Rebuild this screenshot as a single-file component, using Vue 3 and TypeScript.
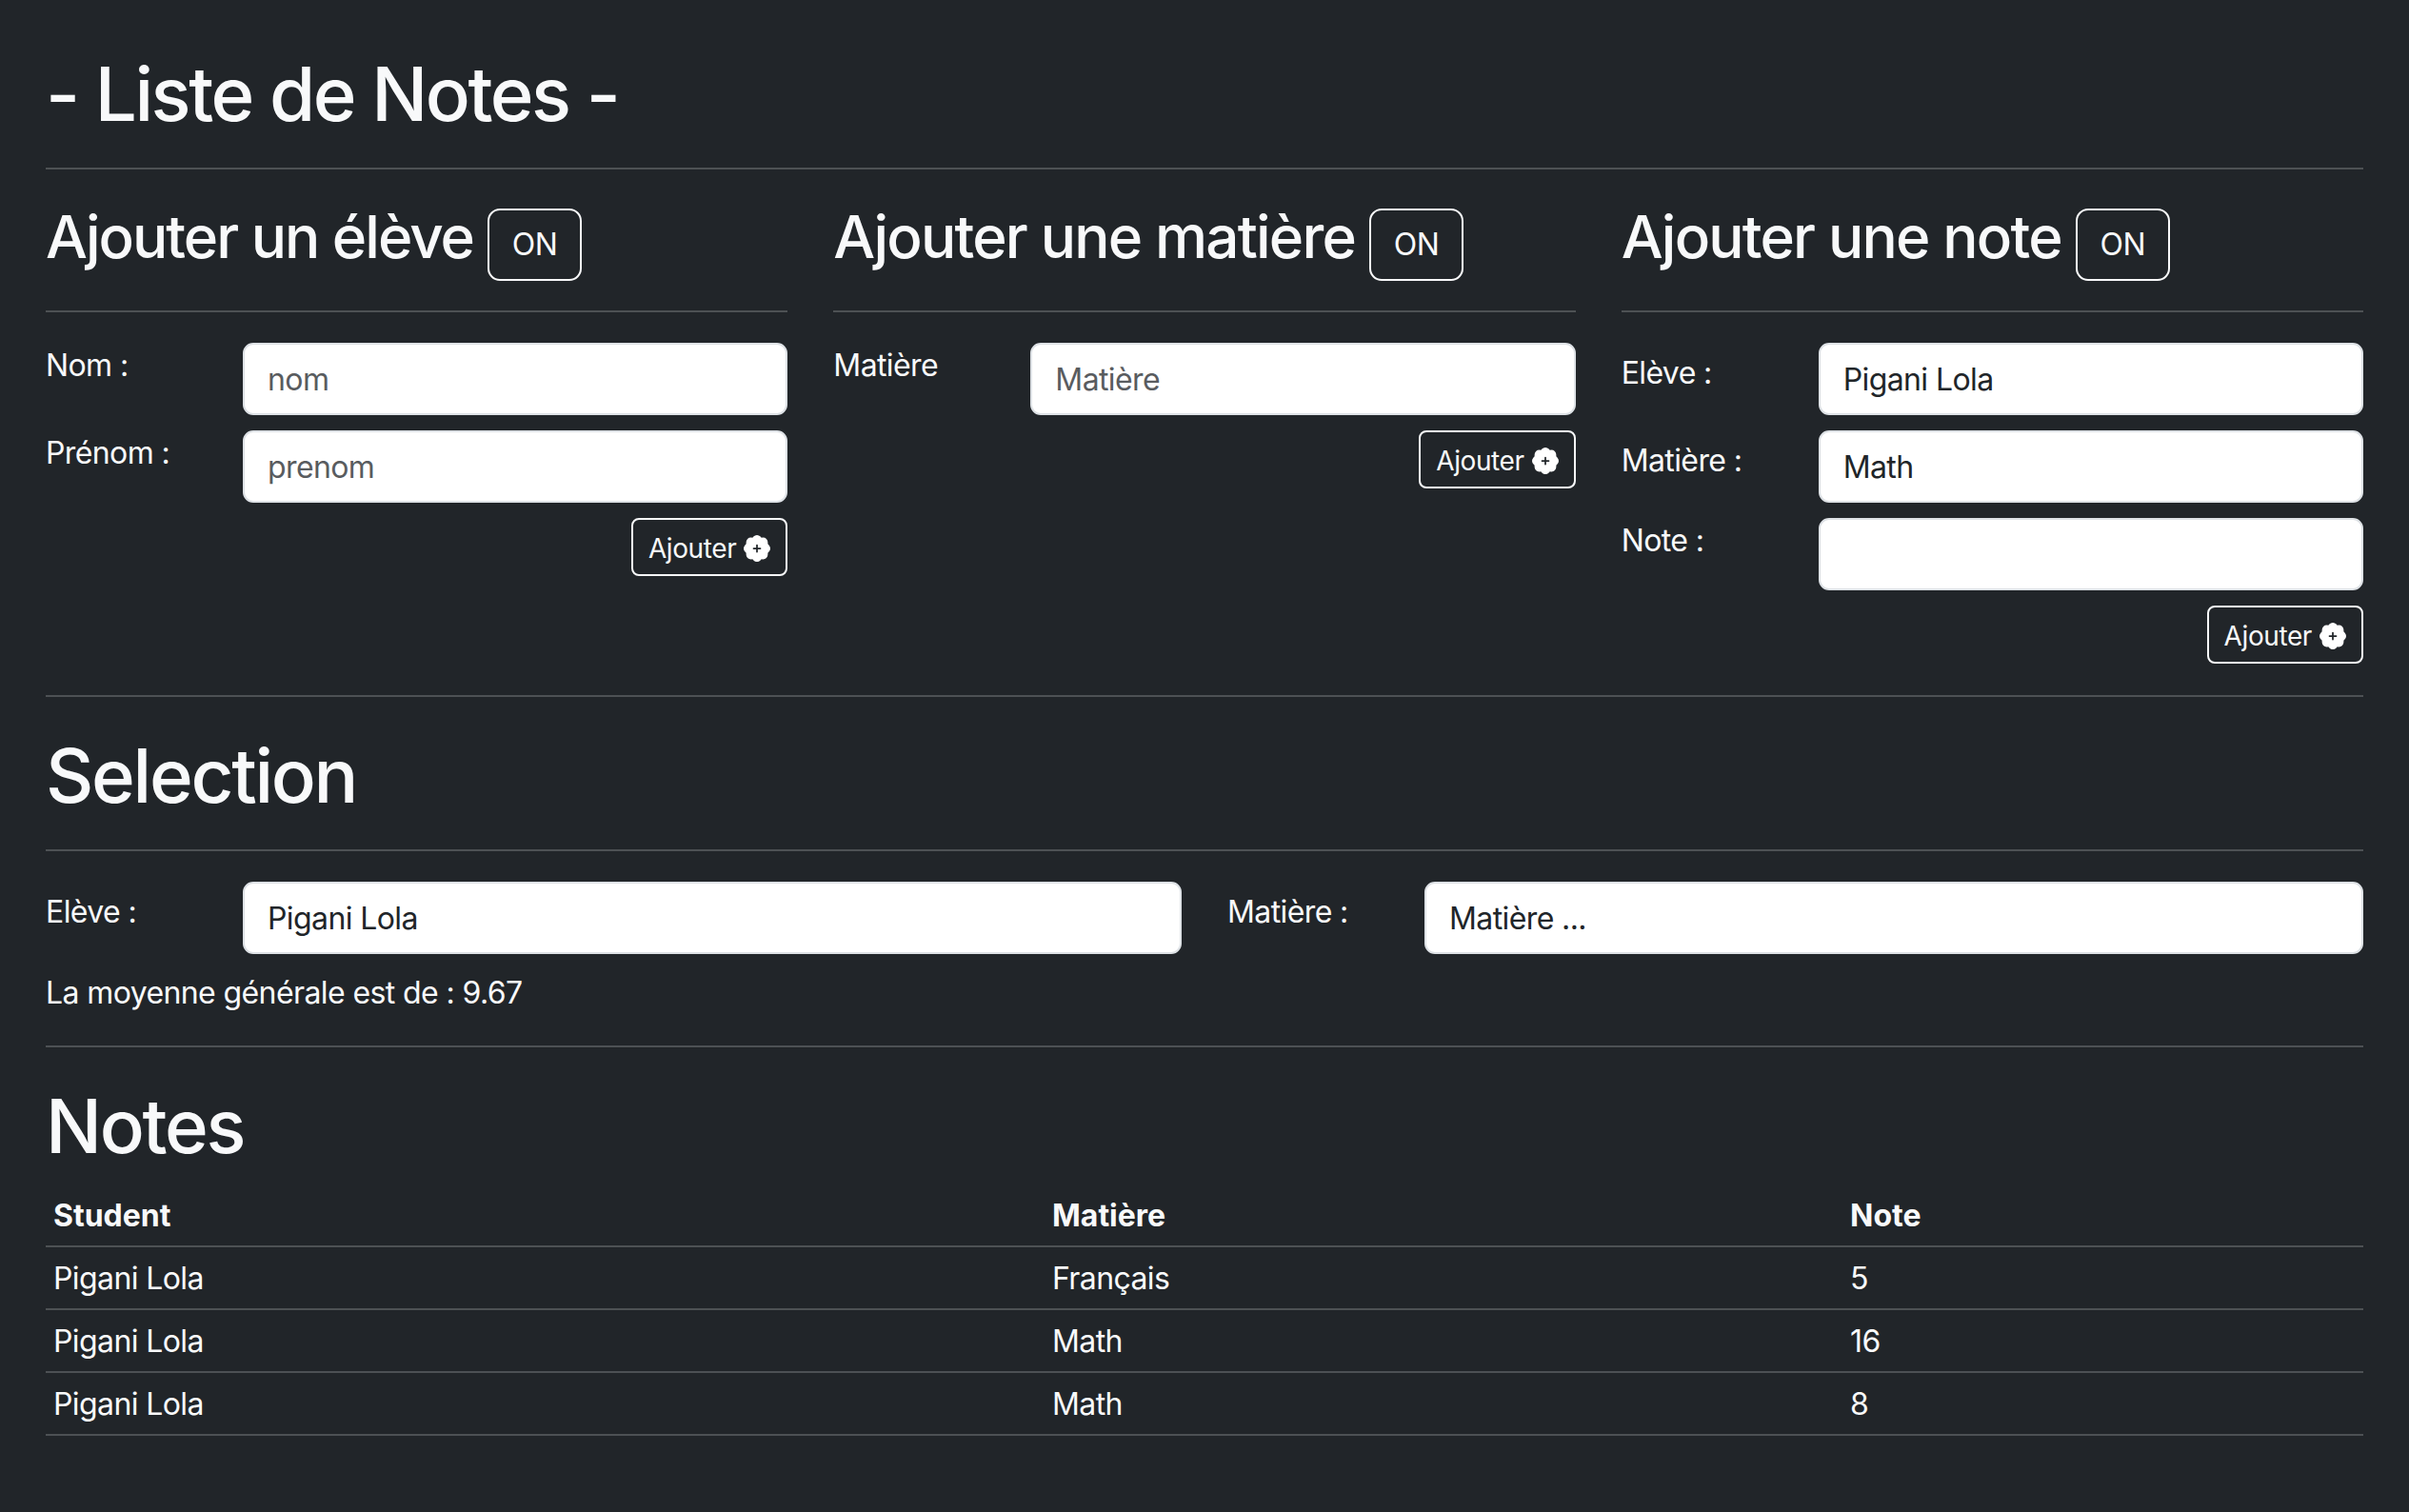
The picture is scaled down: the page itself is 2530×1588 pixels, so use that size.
<script setup lang="ts">
import { ref } from 'vue'

interface NoteRow {
  student: string
  matiere: string
  note: number
}

// bootstrap-icons patch-plus-fill
const patchPlus =
  'M10.067.87a2.89 2.89 0 0 0-4.134 0l-.622.638-.89-.011a2.89 2.89 0 0 0-2.924 2.924l.01.89-.636.622a2.89 2.89 0 0 0 0 4.134l.637.622-.011.89a2.89 2.89 0 0 0 2.924 2.924l.89-.01.622.636a2.89 2.89 0 0 0 4.134 0l.622-.637.89.011a2.89 2.89 0 0 0 2.924-2.924l-.01-.89.636-.622a2.89 2.89 0 0 0 0-4.134l-.637-.622.011-.89a2.89 2.89 0 0 0-2.924-2.924l-.89.01-.622-.636zM8.5 6v1.500H10a.5.5 0 0 1 0 1H8.500V10a.5.5 0 0 1-1 0V8.500H6a.5.5 0 0 1 0-1h1.500V6a.5.5 0 0 1 1 0z'

const notes = ref<NoteRow[]>([
  { student: 'Pigani Lola', matiere: 'Français', note: 5 },
  { student: 'Pigani Lola', matiere: 'Math', note: 16 },
  { student: 'Pigani Lola', matiere: 'Math', note: 8 },
])
</script>

<template>
  <div class="page">
    <h1 class="title">- Liste de Notes -</h1>
    <hr class="rule rule-title" />

    <div class="columns">
      <section>
        <div class="col-head">
          <h2 class="tight">Ajouter un élève</h2>
          <button class="toggle">ON</button>
        </div>
        <hr class="rule rule-head" />
        <div class="field">
          <label>Nom :</label>
          <input class="input" placeholder="nom" />
        </div>
        <div class="field">
          <label>Prénom :</label>
          <input class="input" placeholder="prenom" />
        </div>
        <div class="actions">
          <button class="add">
            Ajouter
            <svg class="plus" viewBox="0 0 16 16"><path fill="#fff" :d="patchPlus" /></svg>
          </button>
        </div>
      </section>

      <section>
        <div class="col-head">
          <h2>Ajouter une matière</h2>
          <button class="toggle">ON</button>
        </div>
        <hr class="rule rule-head" />
        <div class="field">
          <label>Matière</label>
          <input class="input" placeholder="Matière" />
        </div>
        <div class="actions">
          <button class="add">
            Ajouter
            <svg class="plus" viewBox="0 0 16 16"><path fill="#fff" :d="patchPlus" /></svg>
          </button>
        </div>
      </section>

      <section>
        <div class="col-head">
          <h2>Ajouter une note</h2>
          <button class="toggle">ON</button>
        </div>
        <hr class="rule rule-head" />
        <div class="field field-select">
          <label>Elève :</label>
          <div class="input select">Pigani Lola</div>
        </div>
        <div class="field field-select">
          <label>Matière :</label>
          <div class="input select">Math</div>
        </div>
        <div class="field">
          <label>Note :</label>
          <input class="input" />
        </div>
        <div class="actions">
          <button class="add">
            Ajouter
            <svg class="plus" viewBox="0 0 16 16"><path fill="#fff" :d="patchPlus" /></svg>
          </button>
        </div>
      </section>
    </div>

    <hr class="rule rule-section" />

    <h1 class="section-title">Selection</h1>
    <hr class="rule" />
    <div class="selection">
      <div class="field field-select">
        <label>Elève :</label>
        <div class="input select">Pigani Lola</div>
      </div>
      <div class="field field-select">
        <label>Matière :</label>
        <div class="input select">Matière ...</div>
      </div>
    </div>
    <p class="average">La moyenne générale est de : 9.67</p>
    <hr class="rule rule-average" />

    <h1 class="section-title notes-title">Notes</h1>
    <table>
      <thead>
        <tr>
          <th class="c1">Student</th>
          <th class="c2">Matière</th>
          <th>Note</th>
        </tr>
      </thead>
      <tbody>
        <tr v-for="(row, i) in notes" :key="i">
          <td>{{ row.student }}</td>
          <td>{{ row.matiere }}</td>
          <td>{{ row.note }}</td>
        </tr>
      </tbody>
    </table>
  </div>
</template>

<style scoped>
.page {
  box-sizing: border-box;
  min-height: 1588px;
  padding: 51px 48px 0;
  background: #212529;
  color: #f8f9fa;
  font-family: Inter, "Liberation Sans", sans-serif;
  font-size: 32px;
  line-height: 48px;
  letter-spacing: -0.6px;
}

.rule {
  border: 0;
  height: 2px;
  margin: 0;
  background: #4d5154;
}

.title {
  margin: 0;
  font-size: 78px;
  font-weight: 500;
  line-height: 96px;
  letter-spacing: -2.5px;
}

.rule-title {
  margin-top: 29px;
}

.columns {
  display: grid;
  grid-template-columns: repeat(3, 1fr);
  gap: 48px;
  margin-top: 39px;
}

.col-head {
  display: flex;
  align-items: center;
  gap: 15px;
  height: 76px;
}

h2 {
  margin: 0 0 12px;
  font-size: 62px;
  font-weight: 500;
  line-height: 70px;
  letter-spacing: -1.8px;
}

h2.tight {
  letter-spacing: -2px;
}

.toggle {
  box-sizing: border-box;
  width: 99px;
  height: 76px;
  margin-top: 3px;
  background: transparent;
  border: 2px solid #f8f9fa;
  border-radius: 13px;
  color: #f8f9fa;
  font: 400 32px Inter, sans-serif;
  letter-spacing: -0.6px;
}

.rule-head {
  margin: 33px 0 32px;
}

.field {
  display: grid;
  grid-template-columns: 207px 1fr;
  margin-bottom: 16px;
}

.field label {
  line-height: 48px;
}

.field-select label {
  padding-top: 8px;
}

.input {
  box-sizing: border-box;
  width: 100%;
  height: 76px;
  padding: 0 24px;
  background: #fff;
  border: 2px solid #dee2e6;
  border-radius: 11px;
  color: #212529;
  font: 400 32px/74px Inter, sans-serif;
  letter-spacing: -0.6px;
  outline: none;
}

.input::placeholder {
  color: #595c5f;
  opacity: 1;
}

.actions {
  display: flex;
  justify-content: flex-end;
}

.add {
  display: flex;
  align-items: center;
  gap: 8px;
  box-sizing: border-box;
  height: 61px;
  padding: 2px 16px 0;
  background: transparent;
  border: 2px solid #f8f9fa;
  border-radius: 8px;
  color: #f8f9fa;
  font: 400 28px Inter, sans-serif;
  letter-spacing: -0.4px;
}

.plus {
  width: 28px;
  height: 28px;
}

.rule-section {
  margin-top: 33px;
}

.section-title {
  margin: 35px 0 29px;
  font-size: 78px;
  font-weight: 500;
  line-height: 96px;
  letter-spacing: -2.3px;
}

.selection {
  display: grid;
  grid-template-columns: 1fr 1fr;
  gap: 48px;
  margin-top: 32px;
}

.average {
  margin: 1px 0 0;
}

.rule-average {
  margin-top: 31px;
}

.notes-title {
  margin-bottom: 12px;
}

table {
  width: 100%;
  border-collapse: collapse;
}

th,
td {
  height: 66px;
  padding: 2px 8px 0;
  border-bottom: 2px solid #4d5154;
  text-align: left;
  box-sizing: border-box;
}

th {
  font-weight: 700;
  letter-spacing: 0;
}

.c1 {
  width: 1049px;
}

.c2 {
  width: 838px;
}
</style>

<style>
body {
  background: #212529;
}
</style>
